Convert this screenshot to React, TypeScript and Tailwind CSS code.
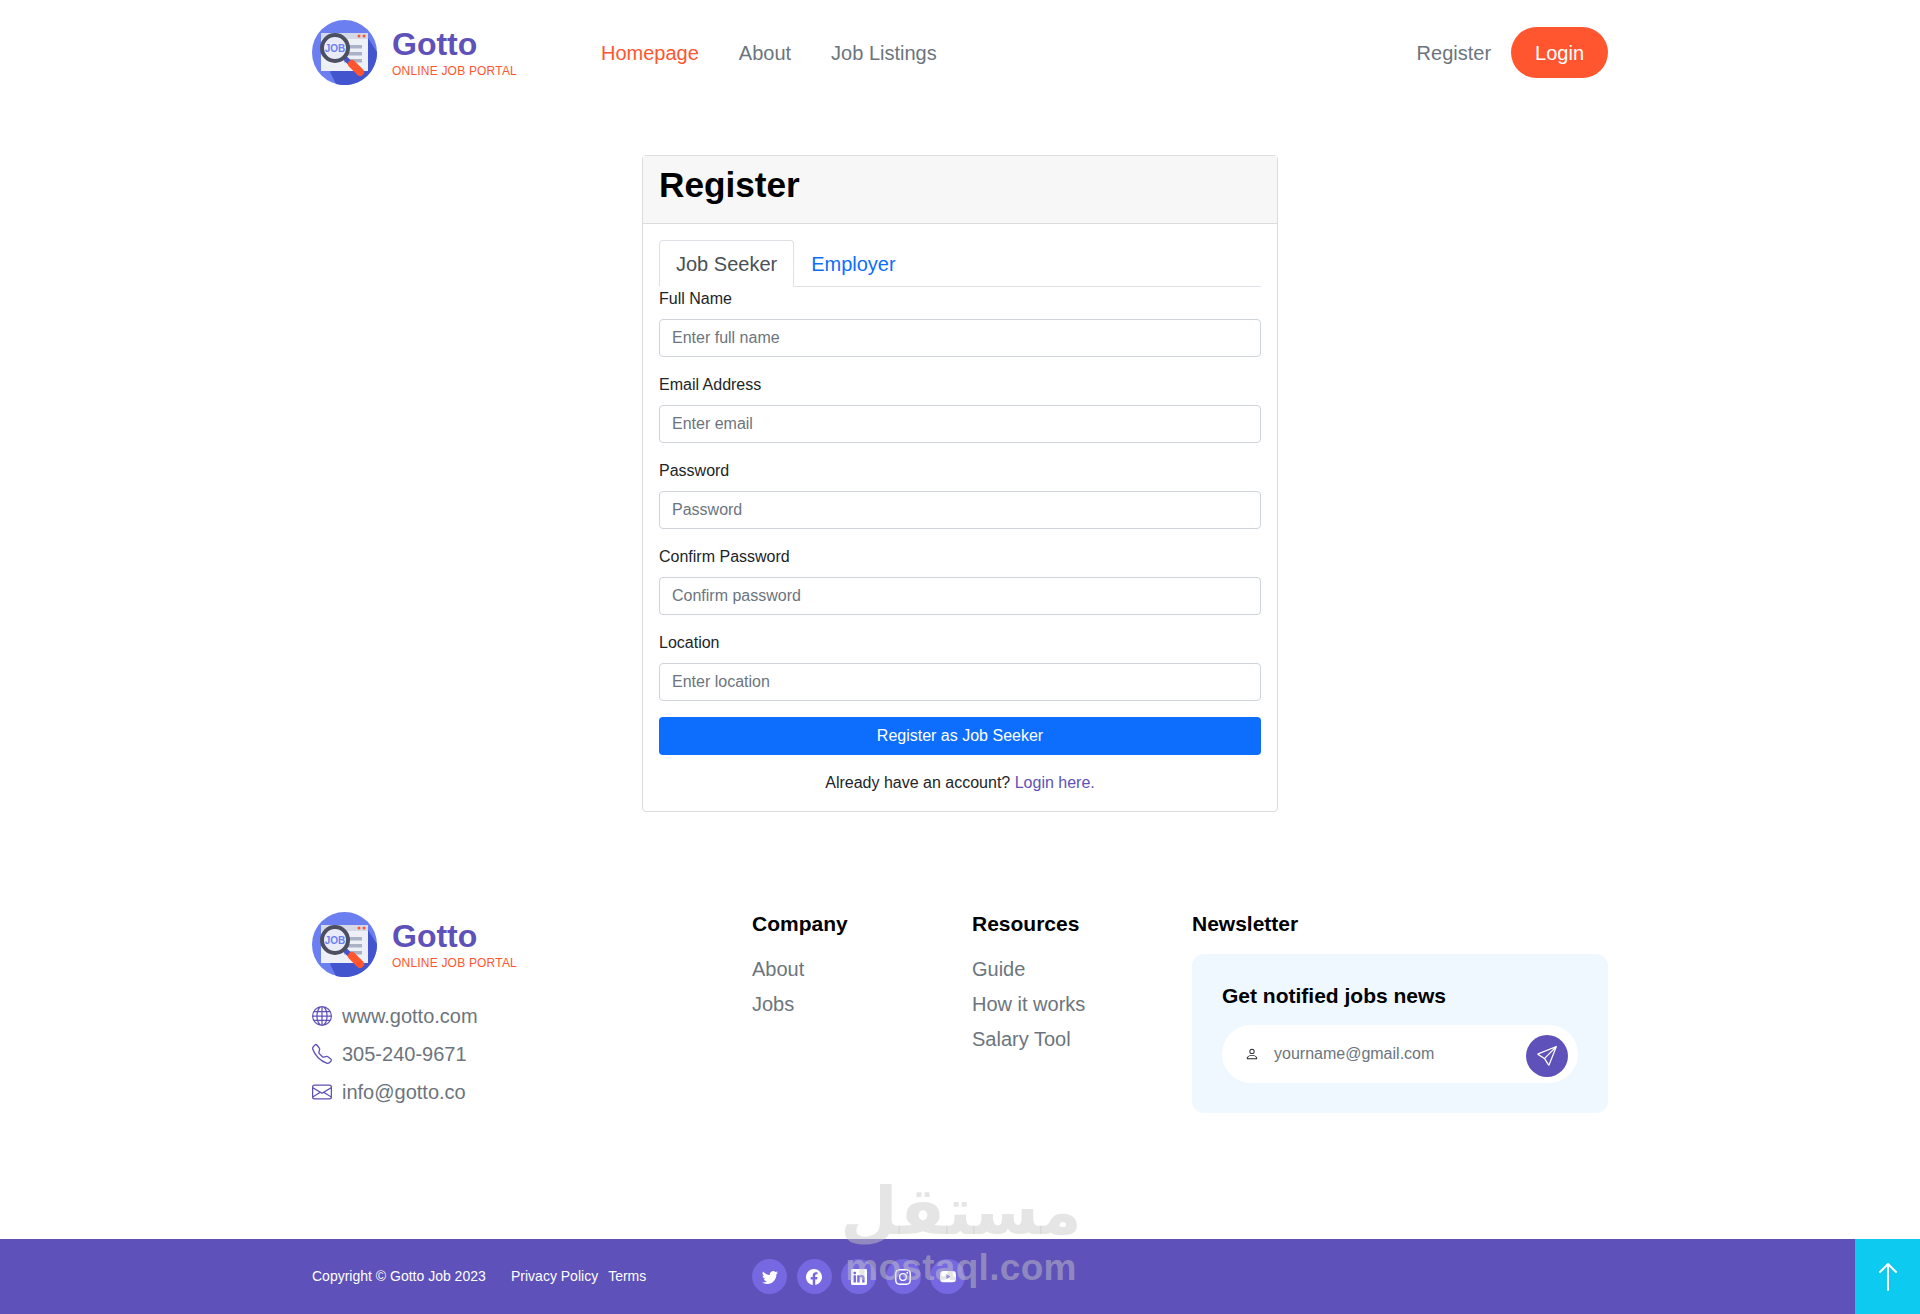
import React from 'react';
import {
  BsArrowUp,
  BsEnvelope,
  BsFacebook,
  BsGlobe,
  BsInstagram,
  BsLinkedin,
  BsPerson,
  BsSend,
  BsTelephone,
  BsTwitter,
  BsYoutube,
} from 'react-icons/bs';

function LogoMark() {
  return (
    <svg width="65" height="65" viewBox="0 0 65 65" className="shrink-0">
      <circle cx="32.5" cy="32.5" r="32.5" fill="#6b7ff0" />
      <path d="M18 52 L56 18 L65 32 A32.5 32.5 0 0 1 24 64 Z" fill="#4255cf" />
      <rect x="9" y="13" width="47" height="38" fill="#eef0f8" />
      <rect x="9" y="13" width="47" height="6" fill="#d5d9e6" />
      <circle cx="47" cy="16" r="1.5" fill="#ff5630" />
      <circle cx="52" cy="16" r="1.5" fill="#ff5630" />
      <rect x="32" y="25" width="18" height="3.5" fill="#a9b2c6" />
      <rect x="32" y="32" width="18" height="3.5" fill="#a9b2c6" />
      <rect x="32" y="39" width="18" height="3.5" fill="#a9b2c6" />
      <line x1="33" y1="38" x2="39" y2="44" stroke="#4255cf" strokeWidth="5" />
      <line x1="40" y1="44" x2="48" y2="52" stroke="#ff5630" strokeWidth="8" strokeLinecap="round" />
      <circle cx="23" cy="28" r="13" fill="#e9ecf8" stroke="#4c4f60" strokeWidth="4" />
      <text x="23" y="32" textAnchor="middle" fontSize="10" fontWeight="700" fill="#6b7ff0" fontFamily="'Liberation Sans', sans-serif">JOB</text>
    </svg>
  );
}

function Logo() {
  return (
    <a href="#" className="flex items-center gap-[15px]">
      <LogoMark />
      <div className="flex flex-col pb-[3px]">
        <span className="text-[32px] leading-[38px] font-bold text-[#5e51b9]">Gotto</span>
        <span className="mt-px text-[12px] leading-[14px] tracking-[0.2px] text-[#ff5630]">ONLINE JOB PORTAL</span>
      </div>
    </a>
  );
}

function Field({ label, placeholder, type = 'text' }: { label: string; placeholder: string; type?: string }) {
  return (
    <div className="mb-4">
      <label className="mb-2 block text-base leading-6 text-[#212529]">{label}</label>
      <input
        type={type}
        placeholder={placeholder}
        className="block h-[38px] w-full rounded border border-[#ced4da] bg-white px-3 text-base text-[#212529] placeholder:text-[#6c757d]"
      />
    </div>
  );
}

const socials = [BsTwitter, BsFacebook, BsLinkedin, BsInstagram, BsYoutube];

export default function App() {
  return (
    <div className="relative min-h-[1314px] bg-white font-['Liberation_Sans',Arial,sans-serif]">
      <header className="mx-auto flex h-[105px] w-[1296px] items-center">
        <Logo />
        <nav className="ml-[84px] flex gap-10 text-[20px] text-[#6c757d]">
          <a href="#" className="text-[#ff5630]">Homepage</a>
          <a href="#">About</a>
          <a href="#">Job Listings</a>
        </nav>
        <div className="ml-auto flex items-center gap-5 text-[20px]">
          <a href="#" className="text-[#6c757d]">Register</a>
          <a href="#" className="flex h-[51px] items-center rounded-full bg-[#ff5630] px-6 text-white">Login</a>
        </div>
      </header>

      <main className="mt-[50px] flex justify-center">
        <div className="w-[636px] rounded border border-[#dcdcdc]">
          <div className="flex h-[68px] items-center border-b border-[#dcdcdc] bg-[#f7f7f7] px-4 pb-[9px]">
            <h1 className="text-[35.2px] leading-10 font-bold text-black">Register</h1>
          </div>
          <div className="p-4">
            <div className="flex h-[47px] border-b border-[#dee2e6] text-[20px]">
              <button className="h-[47px] rounded-t border border-b-white border-[#dee2e6] bg-white px-4 text-[#495057]">Job Seeker</button>
              <button className="ml-px h-[47px] px-4 text-[#0d6efd]">Employer</button>
            </div>
            <form>
              <Field label="Full Name" placeholder="Enter full name" />
              <Field label="Email Address" placeholder="Enter email" type="email" />
              <Field label="Password" placeholder="Password" type="password" />
              <Field label="Confirm Password" placeholder="Confirm password" type="password" />
              <Field label="Location" placeholder="Enter location" />
              <button type="button" className="h-[38px] w-full rounded bg-[#0d6efd] text-base text-white">Register as Job Seeker</button>
              <p className="mt-4 text-center text-base leading-6 text-[#212529]">
                Already have an account? <a href="#" className="text-[#5e51b9]">Login here.</a>
              </p>
            </form>
          </div>
        </div>
      </main>

      <footer className="mt-[100px]">
        <div className="mx-auto flex h-[327px] w-[1296px] items-start">
          <div className="w-[440px]">
            <Logo />
            <ul className="mt-[20px] text-[20px] leading-[38px] text-[#6c757d]">
              <li className="flex items-center gap-[10px]"><BsGlobe className="h-5 w-5 text-[#5e51b9]" />www.gotto.com</li>
              <li className="flex items-center gap-[10px]"><BsTelephone className="h-5 w-5 text-[#5e51b9]" />305-240-9671</li>
              <li className="flex items-center gap-[10px]"><BsEnvelope className="h-5 w-5 text-[#5e51b9]" />info@gotto.co</li>
            </ul>
          </div>
          <div className="w-[220px]">
            <h3 className="text-[21px] leading-6 font-bold text-black">Company</h3>
            <ul className="mt-4 text-[20px] leading-[35px] text-[#6c757d]">
              <li>About</li>
              <li>Jobs</li>
            </ul>
          </div>
          <div className="w-[220px]">
            <h3 className="text-[21px] leading-6 font-bold text-black">Resources</h3>
            <ul className="mt-4 text-[20px] leading-[35px] text-[#6c757d]">
              <li>Guide</li>
              <li>How it works</li>
              <li>Salary Tool</li>
            </ul>
          </div>
          <div className="w-[416px]">
            <h3 className="text-[21px] leading-6 font-bold text-black">Newsletter</h3>
            <div className="mt-[18px] h-[159px] rounded-xl bg-[#eff7ff] px-[30px] pt-[30px]">
              <h4 className="text-[21px] leading-6 font-bold text-black">Get notified jobs news</h4>
              <div className="mt-[17px] flex h-[58px] items-center rounded-full bg-white pr-[10px] pl-[23px]">
                <BsPerson className="h-[14px] w-[14px] text-[#212529]" />
                <span className="ml-[15px] flex-1 text-base text-[#6c757d]">yourname@gmail.com</span>
                <button className="mt-[3px] flex h-[42px] w-[42px] items-center justify-center rounded-full bg-[#5e51b9] text-white">
                  <BsSend className="h-5 w-5" />
                </button>
              </div>
            </div>
          </div>
        </div>

        <div className="flex h-[75px] bg-[#5e51b9]">
          <div className="flex flex-1 items-center pl-[312px] text-sm text-white">
            <span className="-mt-[2px] w-[199px]">Copyright © Gotto Job 2023</span>
            <a href="#" className="-mt-[2px] mr-[10px]">Privacy Policy</a>
            <a href="#" className="-mt-[2px]">Terms</a>
            <div className="ml-[106px] flex gap-[9.5px]">
              {socials.map((Icon, i) => (
                <a key={i} href="#" className="flex h-[35px] w-[35px] items-center justify-center rounded-full bg-[#7568e0]">
                  <Icon className="h-4 w-4 text-white" />
                </a>
              ))}
            </div>
          </div>
          <a href="#" className="flex w-[65px] items-center justify-center bg-[#0dcaf0] text-white">
            <BsArrowUp className="h-8 w-8" />
          </a>
        </div>
      </footer>

      {/* site watermark over the footer */}
      <div className="pointer-events-none absolute top-[1172px] left-[845px] flex w-[232px] flex-col items-center text-[rgba(200,200,200,0.48)]">
        <span dir="rtl" className="font-['DejaVu_Sans',sans-serif] text-[66px] leading-[80px] font-bold">مستقل</span>
        <span className="-mt-[4px] text-[37px] leading-[40px] font-bold tracking-[0.3px]">mostaql.com</span>
      </div>
    </div>
  );
}
